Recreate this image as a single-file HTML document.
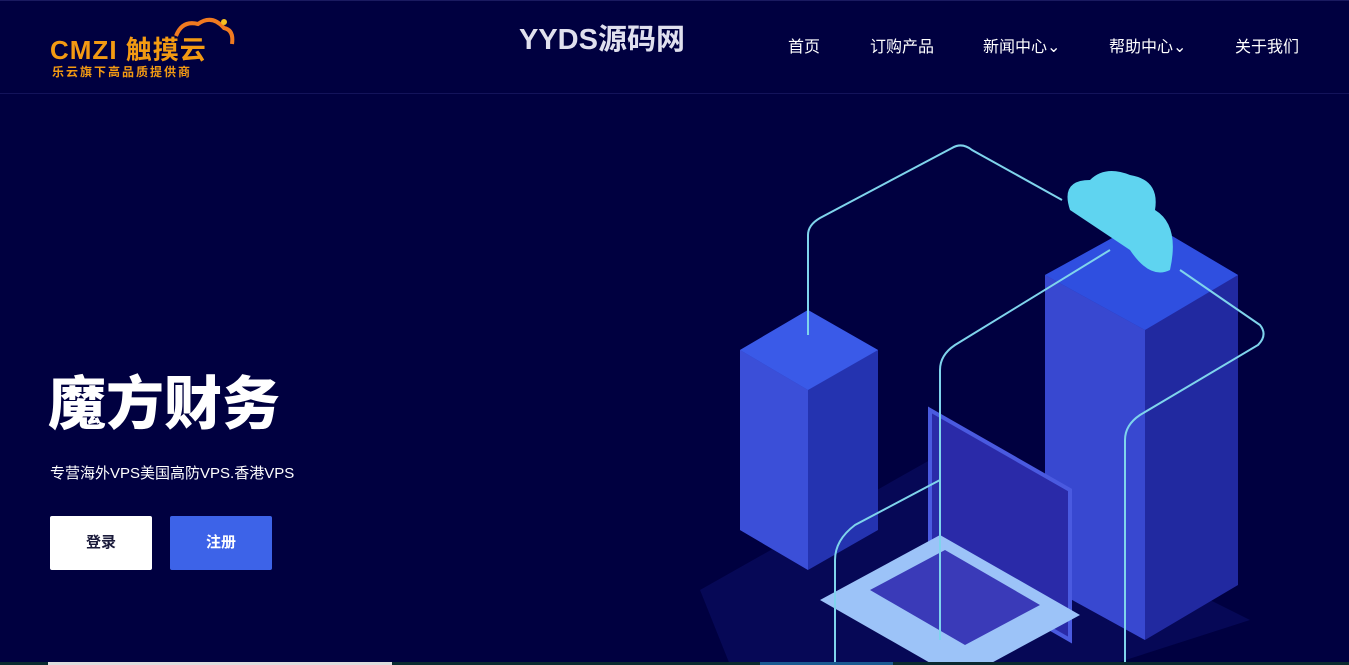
<!DOCTYPE html>
<html><head><meta charset="utf-8"><style>
*{margin:0;padding:0;box-sizing:border-box}
body{width:1349px;height:665px;overflow:hidden;background:#000040;font-family:"Liberation Sans","Noto Sans CJK SC",sans-serif;color:#fff;position:relative}
.hdr{position:absolute;left:0;top:0;width:1349px;height:94px;border-bottom:1px solid #13135a;border-top:1px solid #1a1a60}
.nav a{position:absolute;top:33px;font-size:16px;color:#fff;text-decoration:none}
.ttl{position:absolute;left:519px;top:16px;font-size:29px;font-weight:bold;color:#e0e0ee}
h1{position:absolute;left:48px;top:370px;font-size:58px;font-weight:900;letter-spacing:0px;line-height:70px}
.sub{position:absolute;left:50px;top:462px;font-size:15px}
.btn{position:absolute;top:516px;width:102px;height:54px;line-height:54px;text-align:center;font-size:15px;font-weight:bold;border-radius:2px}
</style></head><body>
<div class="hdr"></div>
<div style="position:absolute;left:50px;top:30px;font-size:26px;color:#f39a12;font-weight:bold;letter-spacing:1px">CMZI 触摸云</div>
<svg style="position:absolute;left:168px;top:14px" width="70" height="40"><path d="M8 22 Q14 6 30 10 Q44 0 56 14 Q66 16 64 30" fill="none" stroke="#f07a20" stroke-width="4"/><circle cx="56" cy="8" r="3" fill="#f5c020"/></svg>
<div style="position:absolute;left:52px;top:63px;font-size:12px;color:#f39a12;letter-spacing:2px;font-weight:bold">乐云旗下高品质提供商</div>
<div class="ttl">YYDS源码网</div>
<div class="nav"><a style="left:788px">首页</a><a style="left:870px">订购产品</a><a style="left:983px">新闻中心⌄</a><a style="left:1109px">帮助中心⌄</a><a style="left:1235px">关于我们</a></div>
<h1>魔方财务</h1>
<div class="sub">专营海外VPS美国高防VPS.香港VPS</div>
<div class="btn" style="left:50px;background:#fff;color:#1a1a3a">登录</div>
<div class="btn" style="left:170px;background:#3d63e8;color:#fff">注册</div>
<svg style="position:absolute;left:690px;top:140px" width="600" height="525">
<path d="M10 450 L240 320 L560 480 L420 525 H40 Z" fill="#080c60" opacity=".7"/>
<path d="M50 210 L118 170 L188 210 L188 390 L118 430 L50 390 Z" fill="#2433b0"/>
<path d="M50 210 L118 250 L118 430 L50 390 Z" fill="#3b4fd8"/>
<path d="M50 210 L118 170 L188 210 L118 250 Z" fill="#3a5ae8"/>
<path d="M355 135 L455 80 L548 135 L548 445 L455 500 L355 445 Z" fill="#2129a0"/>
<path d="M355 135 L455 190 L455 500 L355 445 Z" fill="#3848d0"/>
<path d="M355 135 L455 80 L548 135 L455 190 Z" fill="#2f4fe0"/>
<path d="M380 70 Q370 40 400 40 Q415 25 440 35 Q470 40 465 70 Q490 85 480 130 Q460 140 440 110 Z" fill="#5fd4f0"/>
<path d="M240 270 L380 350 L380 500 L240 420 Z" fill="#2a2aa8" stroke="#4a5ae0" stroke-width="4"/>
<path d="M130 460 L250 395 L390 475 L270 540 Z" fill="#9cc3f8"/>
<path d="M180 450 L255 410 L350 465 L275 505 Z" fill="#3a3ab8"/>
<g fill="none" stroke="#7fd4ec" stroke-width="2">
<path d="M118 195 V95 Q118 85 130 78 L262 8 Q272 2 282 10 L372 60"/>
<path d="M250 500 V230 Q250 215 265 205 L420 110"/>
<path d="M490 130 L570 185 Q578 195 568 205 L450 275 Q435 285 435 300 V525"/>
<path d="M145 525 V420 Q145 400 165 385 L250 340"/>
</g>
</svg>
<div style="position:absolute;left:0;top:662px;width:1349px;height:3px;background:#0a2a30"></div>
<div style="position:absolute;left:48px;top:662px;width:344px;height:3px;background:#ddd"></div>
<div style="position:absolute;left:760px;top:662px;width:133px;height:3px;background:#1a5a90"></div>
</body></html>
